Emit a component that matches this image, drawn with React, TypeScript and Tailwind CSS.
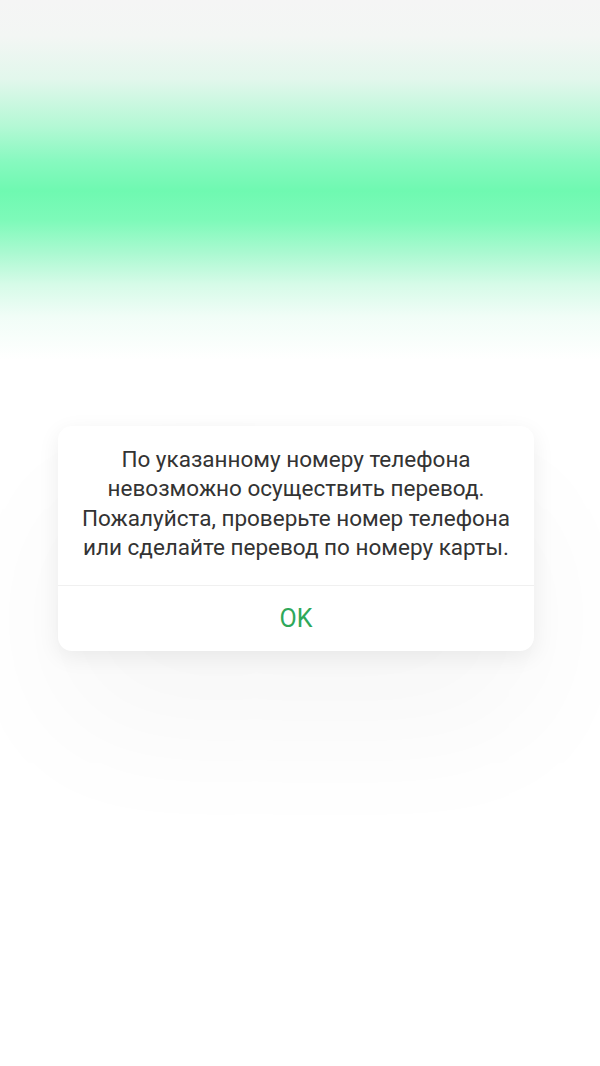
export default function App() {
  return (
    <div className="relative h-[1066px] w-full overflow-hidden bg-white font-['Roboto','Inter',sans-serif]">
      {/* blurred backdrop behind the alert */}
      <div className="h-[360px] w-full bg-[linear-gradient(180deg,#f5f5f5_0%,#f3f6f4_10%,#e2f7ec_22%,#b4f8d5_35%,#86f9bf_45%,#6ff9b1_53%,#7dfab9_61%,#a9f9d0_70%,#d6fbe8_79%,#f1fdf7_88%,#ffffff_100%)]" />

      {/* alert */}
      <div className="absolute inset-0 flex items-start justify-center pt-[426px] pr-[8px]">
        <div className="w-[476px] overflow-hidden rounded-[14px] bg-white shadow-[0_6px_22px_rgba(0,0,0,0.07),0_80px_140px_rgba(0,0,0,0.035)]">
          <div className="px-4 pt-[19px] pb-[23px] text-center text-[22.5px] leading-[29.3px] text-[#333333]">
            <p>По указанному номеру телефона</p>
            <p>невозможно осуществить перевод.</p>
            <p>Пожалуйста, проверьте номер телефона</p>
            <p>или сделайте перевод по номеру карты.</p>
          </div>
          <div className="h-px bg-[#f0f0f0]" />
          <button className="flex h-[65px] w-full items-center justify-center text-[25px] text-[#2ea85a]">
            OK
          </button>
        </div>
      </div>
    </div>
  );
}
